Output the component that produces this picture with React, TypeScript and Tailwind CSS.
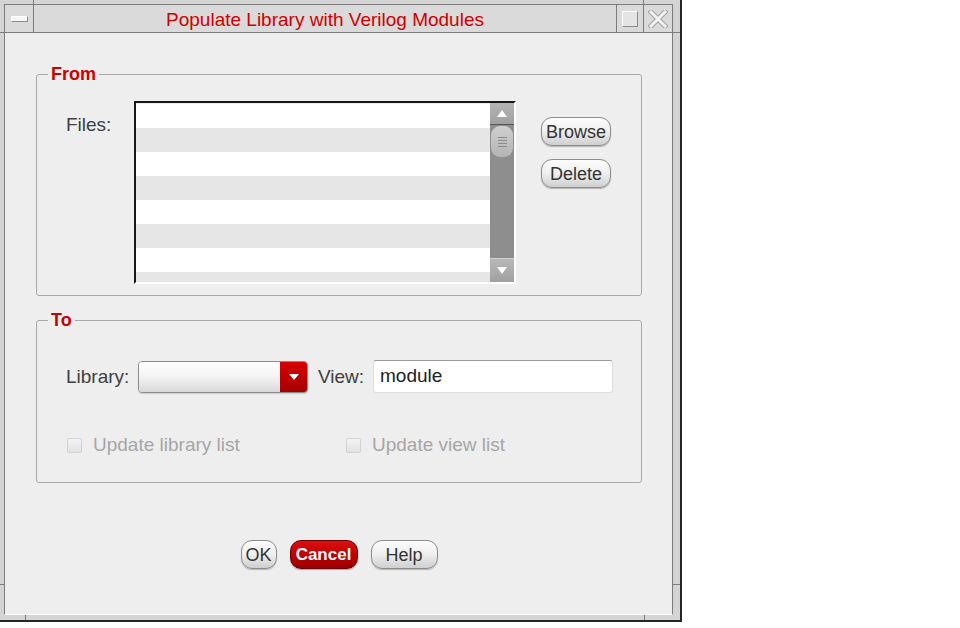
import React from "react";

function PillButton({ label, w }: { label: string; w: string }) {
  return (
    <div
      className={`${w} h-[29px] rounded-[11px] border border-[#8c8c8c] bg-gradient-to-b from-[#fdfdfd] via-[#eeeeee] to-[#cfcfcf] shadow-[0_1px_1px_rgba(0,0,0,0.25)] flex items-center justify-center text-[18px] text-[#333333] leading-none`}
    >
      {label}
    </div>
  );
}

function Legend({ text }: { text: string }) {
  return (
    <div className="h-0 flex">
      <span className="ml-[11px] -mt-[11px] h-[21px] px-[3px] bg-[#eeeeee] text-[#cc0000] font-bold text-[18px] leading-[21px]">
        {text}
      </span>
    </div>
  );
}

function Checkbox({ label }: { label: string }) {
  return (
    <div className="flex items-center">
      <div className="w-[15px] h-[15px] rounded-[2px] border border-[#d2d2d2] bg-gradient-to-b from-[#f4f4f4] to-[#e2e2e2]" />
      <span className="ml-[11px] text-[19px] text-[#a6a6a6] leading-[22px]">{label}</span>
    </div>
  );
}

export default function App() {
  const rows = [0, 1, 2, 3, 4, 5, 6, 7];
  return (
    <div className="w-[960px] h-[628px] bg-white font-['Liberation_Sans',Arial,sans-serif]">
      <div className="relative w-[682px] h-[622px] bg-[#d4d4d4] border-r-2 border-b-2 border-[#262626] pl-[4px] pt-[4px] pr-[7px] pb-[5px] flex">
        {/* frame notches */}
        <div className="absolute left-[33px] top-0 w-px h-[4px] bg-[#7c7c7c]" />
        <div className="absolute left-[643px] top-0 w-px h-[4px] bg-[#7c7c7c]" />
        <div className="absolute left-0 top-[32px] w-[4px] h-px bg-[#7c7c7c]" />
        <div className="absolute left-[673px] top-[32px] w-[7px] h-px bg-[#7c7c7c]" />
        <div className="absolute left-0 top-[584px] w-[4px] h-px bg-[#7c7c7c]" />
        <div className="absolute left-[673px] top-[584px] w-[7px] h-px bg-[#7c7c7c]" />
        <div className="absolute left-[25px] top-[615px] w-px h-[5px] bg-[#7c7c7c]" />
        <div className="absolute left-[644px] top-[615px] w-px h-[5px] bg-[#7c7c7c]" />

        <div className="flex-1 flex flex-col border-l border-t border-r border-[#7c7c7c] border-b border-b-white">
          {/* Title bar */}
          <div className="h-[28px] flex border-b border-[#7c7c7c] bg-[#dadada]">
            <div className="w-[29px] border-r border-[#7c7c7c] flex items-center justify-center">
              <div className="w-[17px] h-[6px] bg-[#f6f6f6] border border-white border-r-[#8a8a8a] border-b-[#8a8a8a]" />
            </div>
            <div className="flex-1 flex items-center justify-center text-[#d00000] text-[19px] leading-none pt-[1px]">
              Populate Library with Verilog Modules
            </div>
            <div className="w-[27px] border-l border-[#7c7c7c] flex items-center justify-center">
              <div className="w-[16px] h-[16px] bg-[#e4e4e4] border border-white border-r-[#8a8a8a] border-b-[#8a8a8a]" />
            </div>
            <div className="w-[29px] border-l border-[#7c7c7c] flex items-center justify-center">
              <svg width="20" height="18" viewBox="0 0 20 18">
                <path d="M3 2 L17 16 M17 2 L3 16" stroke="#a0a0a0" strokeWidth="5" strokeLinecap="square" />
                <path d="M3 2 L17 16 M17 2 L3 16" stroke="#f2f2f2" strokeWidth="3" strokeLinecap="square" />
              </svg>
            </div>
          </div>

          {/* Body */}
          <div className="flex-1 bg-[#eeeeee] flex flex-col pl-[31px] pt-[41px]">
            {/* From group */}
            <div className="w-[606px] h-[222px] border border-[#a8a8a8] rounded-[3px] flex flex-col">
              <Legend text="From" />
              <div className="flex pl-[29px] pt-[26px]">
                <div className="w-[68px] pt-[13px] text-[19px] leading-[22px] text-[#404040]">Files:</div>
                <div className="w-[382px] h-[183px] border-t-2 border-l-2 border-[#161616] border-r-2 border-b-2 border-r-white border-b-white flex">
                  <div className="flex-1 flex flex-col pt-[1px] overflow-hidden">
                    {rows.map((i) => (
                      <div key={i} className={`h-[24px] shrink-0 ${i % 2 === 0 ? "bg-white" : "bg-[#e6e6e6]"}`} />
                    ))}
                  </div>
                  <div className="w-[24px] bg-[#8e8e8e] flex flex-col">
                    <div className="h-[22px] bg-gradient-to-b from-[#b4b4b4] to-[#a0a0a0] border-b border-[#555555] flex items-center justify-center">
                      <svg width="10" height="7" viewBox="0 0 10 7">
                        <path d="M5 0 L10 7 L0 7 Z" fill="#ffffff" />
                      </svg>
                    </div>
                    <div className="mt-[1px] mx-[1px] h-[31px] rounded-[9px] bg-gradient-to-b from-[#d0d0d0] to-[#b4b4b4] flex flex-col items-center justify-center gap-[2px]">
                      <div className="w-[9px] h-px bg-[#8a8a8a]" />
                      <div className="w-[9px] h-px bg-[#8a8a8a]" />
                      <div className="w-[9px] h-px bg-[#8a8a8a]" />
                      <div className="w-[9px] h-px bg-[#8a8a8a]" />
                    </div>
                    <div className="flex-1" />
                    <div className="h-[24px] bg-gradient-to-b from-[#b8b8b8] to-[#a0a0a0] border-t border-[#cfcfcf] flex items-center justify-center">
                      <svg width="10" height="7" viewBox="0 0 10 7">
                        <path d="M0 0 L10 0 L5 7 Z" fill="#ffffff" />
                      </svg>
                    </div>
                  </div>
                </div>
                <div className="ml-[25px] pt-[16px] flex flex-col gap-[13px]">
                  <PillButton label="Browse" w="w-[70px]" />
                  <PillButton label="Delete" w="w-[70px]" />
                </div>
              </div>
            </div>

            {/* To group */}
            <div className="mt-[24px] w-[606px] h-[163px] border border-[#a8a8a8] rounded-[3px] flex flex-col">
              <Legend text="To" />
              <div className="flex items-center pl-[29px] pt-[39px]">
                <div className="w-[72px] text-[19px] leading-[22px] text-[#404040]">Library:</div>
                <div className="w-[170px] h-[32px] rounded-[4px] border border-[#8c8c8c] flex overflow-hidden shadow-[0_1px_1px_rgba(0,0,0,0.15)]">
                  <div className="flex-1 bg-gradient-to-b from-[#ffffff] via-[#f3f3f3] to-[#d8d8d8]" />
                  <div className="w-[27px] bg-gradient-to-b from-[#d80000] to-[#a60000] flex items-center justify-center">
                    <svg width="10" height="6" viewBox="0 0 10 6">
                      <path d="M0 0 L10 0 L5 6 Z" fill="#ffffff" />
                    </svg>
                  </div>
                </div>
                <div className="ml-[10px] w-[55px] text-[19px] leading-[22px] text-[#404040]">View:</div>
                <div className="w-[240px] h-[33px] rounded-[3px] bg-white border border-[#dedede] border-t-[#9a9a9a] flex items-center pl-[6px] text-[19px] text-[#222222]">
                  module
                </div>
              </div>
              <div className="flex items-center pl-[30px] mt-[42px] h-[20px]">
                <div className="w-[279px]">
                  <Checkbox label="Update library list" />
                </div>
                <Checkbox label="Update view list" />
              </div>
            </div>

            {/* Buttons */}
            <div className="mt-[57px] w-[606px] flex justify-center gap-[13px]">
              <PillButton label="OK" w="w-[36px]" />
              <div className="w-[68px] h-[29px] rounded-[11px] border border-[#6e0000] bg-gradient-to-b from-[#dc1010] via-[#c00000] to-[#980000] shadow-[0_1px_1px_rgba(0,0,0,0.3)] flex items-center justify-center text-[17px] font-bold text-white leading-none">
                Cancel
              </div>
              <PillButton label="Help" w="w-[67px]" />
            </div>
          </div>
        </div>
      </div>
    </div>
  );
}
